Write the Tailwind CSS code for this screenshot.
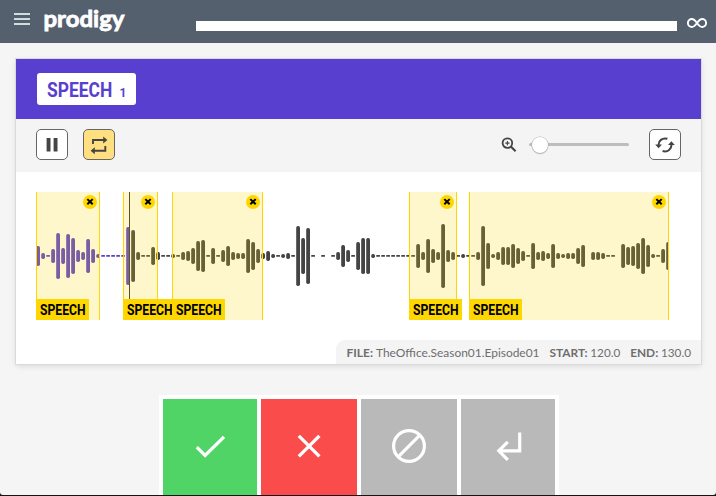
<!DOCTYPE html>
<html lang="en">
<head>
<meta charset="utf-8">
<title>prodigy</title>
<script src="https://cdn.jsdelivr.net/npm/@tailwindcss/browser@4"></script>
</head>
<body class="bg-[#151419] overflow-hidden font-['Lato',sans-serif]">
<div class="flex flex-col h-[495px] w-[716px] overflow-hidden bg-[#f5f5f5] rounded-b-[3px]">
  <header class="h-[43px] shrink-0 bg-[#55606e] flex items-start">
    <svg class="ml-[14px] mt-[13px] w-4 h-3" viewBox="0 0 16 12" fill="#d2dcdf"><path d="M0 0h16v2H0zM0 5h16v2H0zM0 10h16v2H0z"/></svg>
    <svg class="ml-[13px] w-[84px] h-10" viewBox="0 0 84 40"><text x="0.5" y="26.5" font-family="Lato" font-weight="700" font-size="23" fill="#fff" stroke="#fff" stroke-width=".8" textLength="81" lengthAdjust="spacingAndGlyphs">prodigy</text></svg>
    <div class="ml-[69px] mt-[21px] w-[481px] h-[10px] bg-white"></div>
    <svg class="ml-[10px] mt-[18px] w-5 h-[10px]" viewBox="0 0 20 10" fill="none" stroke="#fff" stroke-width="1.9"><path d="M10 5C8.2 2.5 7 1 4.9 1a4 4 0 0 0 0 8C7 9 8.2 7.5 10 5s3-4 5.1-4a4 4 0 0 1 0 8C13 9 11.8 7.5 10 5z"/></svg>
  </header>

  <main class="mt-4 ml-4 w-[685px] h-[305px] shrink-0 bg-white flex flex-col shadow-[0_0_0_1px_#dadada,0_2px_6px_rgba(0,0,0,0.12)]">
    <div class="h-[60px] bg-[#583fcf] flex items-center pl-[21px]">
      <div class="w-[99px] h-8 rounded-[3px] bg-white flex">
        <svg class="w-[78px] h-8" viewBox="0 0 78 32" font-family="Roboto" font-weight="700" fill="#583fcf"><text transform="translate(10 24) scale(.87 1)" font-size="20" textLength="75" lengthAdjust="spacingAndGlyphs">SPEECH</text></svg>
        <svg class="w-[20px] h-8" viewBox="78 0 20 32" font-family="Roboto" font-weight="700" fill="#583fcf"><text x="82.5" y="24" font-size="12">1</text></svg>
      </div>
    </div>
    <div class="h-[53px] bg-[#f4f4f4] flex items-start pt-[10px] pl-5 pr-5">
      <button class="w-8 h-[31px] rounded-[5px] border border-[#666] bg-white flex items-center justify-center">
        <svg class="w-3 h-[14px]" viewBox="0 0 12 14" fill="#444"><path d="M.6 0h3.9v13.5H.6zM7.6 0h3.9v13.5H7.6z"/></svg>
      </button>
      <button class="ml-[15px] w-8 h-[31px] rounded-[5px] border border-[#666] bg-[#ffdf80] flex items-center justify-center">
        <svg class="w-[18px] h-[18px]" viewBox="0 0 18 18"><path d="M3 8V4h11M15.3 10v4.8H4" fill="none" stroke="#444" stroke-width="1.9"/><path d="M13.2 .5l4.2 3.5-4.2 3.5zM4.8 11.3L.6 14.8l4.2 3.5z" fill="#444"/></svg>
      </button>
      <svg class="ml-auto mt-2 w-4 h-4" viewBox="0 0 16 16" fill="none" stroke="#444"><circle cx="6.4" cy="6.1" r="4.8" stroke-width="1.8"/><path d="M9.8 9.5l4.8 4.7" stroke-width="2.1"/><path d="M6.4 4v4.2M4.3 6.1h4.2" stroke-width="1.1"/></svg>
      <div class="relative ml-[12px] mt-[14px] w-[100px] h-[3px] rounded-full bg-[#bdbdbd]">
        <div class="absolute left-[2.5px] -top-[6px] w-4 h-4 rounded-full bg-white shadow-[0_0_0_.6px_#aaa,0_1px_1px_rgba(0,0,0,.25)]"></div>
      </div>
      <button class="ml-5 w-8 h-[31px] rounded-[5px] border border-[#666] bg-white flex items-center justify-center">
        <svg class="w-5 h-4" viewBox="0 0 20 16"><path d="M3.6 8.5C3.1 4 7.3.2 12.4 1.8M16.4 7C16.9 12 12.7 15.6 7.6 14" fill="none" stroke="#444" stroke-width="2"/><path d="M.2 7.6h6.8L3.6 11.2zM13 7.9h6.8L16.4 4.3z" fill="#444"/></svg>
      </button>
    </div>
    <div class="grow flex flex-col pt-5">
      <svg id="wave" class="ml-5 w-[640px] h-[128px]" viewBox="36 0 640 128"></svg>
      <div class="mt-5 self-end w-[365px] h-6 rounded-tl-[9px] bg-[#f4f4f4]">
        <svg class="w-[365px] h-6" viewBox="336 0 365 24" font-family="Lato" font-size="12.2" fill="#6e6e6e">
          <text x="346.5" y="16.8" font-weight="700" textLength="26.5" lengthAdjust="spacingAndGlyphs">FILE:</text>
          <text x="376" y="16.8" textLength="163.5" lengthAdjust="spacingAndGlyphs">TheOffice.Season01.Episode01</text>
          <text x="549.5" y="16.8" font-weight="700" textLength="38" lengthAdjust="spacingAndGlyphs">START:</text>
          <text x="590.3" y="16.8" textLength="30" lengthAdjust="spacingAndGlyphs">120.0</text>
          <text x="630.2" y="16.8" font-weight="700" textLength="28" lengthAdjust="spacingAndGlyphs">END:</text>
          <text x="661" y="16.8" textLength="30" lengthAdjust="spacingAndGlyphs">130.0</text>
        </svg>
      </div>
    </div>
  </main>

  <footer class="mt-[31px] ml-[159px] w-[400px] h-[100px] shrink-0 bg-white p-1 pb-0 flex gap-1">
    <button class="w-[94px] bg-[#50d466] flex"><svg class="w-full h-full" viewBox="0 0 94 96" fill="none" stroke="#fff" stroke-width="3.3"><path d="M33.8 48.2l8.3 8.3L61 37.8"/></svg></button>
    <button class="w-[96px] bg-[#fa4c4a] flex"><svg class="w-full h-full" viewBox="0 0 96 96" fill="none" stroke="#fff" stroke-width="3.3"><path d="M37.8 36.8l20.6 20.6M58.4 36.8L37.8 57.4"/></svg></button>
    <button class="w-[96px] bg-[#b9b9b9] flex"><svg class="w-full h-full" viewBox="0 0 96 96" fill="none" stroke="#fff" stroke-width="3.2"><circle cx="48" cy="47" r="15.4"/><path d="M37.4 57.6l21.2-21.2"/></svg></button>
    <button class="w-[94px] bg-[#b9b9b9] flex"><svg class="w-full h-full" viewBox="0 0 94 96" fill="none" stroke="#fff" stroke-width="3.2"><path d="M58.7 33.5v18.3H38M46.8 42.8L37.8 51.8l9 9"/></svg></button>
  </footer>
</div>
<script>
// Bar heights, one per 5px step; 2 is silence, 0 is a gap.
const bars = [20,6,2,14,46,16,44,36,12,8,34,14,4,2,2,2,2,2,58,52,8,2,2,18,8,2,2,4,2,8,10,16,30,32,2,16,2,12,20,8,6,6,34,28,14,6,10,4,2,4,6,2,60,36,56,2,0,2,0,2,8,22,12,2,28,36,36,4,2,2,2,2,2,2,2,2,24,8,34,14,8,64,12,8,2,4,2,2,8,60,26,4,8,18,18,24,16,10,2,26,8,10,6,24,6,4,6,6,16,22,0,8,8,6,2,2,0,24,18,20,26,36,22,4,2,14,28];
const regions = [[36,100],[123,158],[172,263],[409,457],[469,669]];
let s = '<defs><clipPath id="c"><rect x="36" y="0" width="632" height="128"/></clipPath></defs><g clip-path="url(#c)">';
bars.forEach((h, i) => {
  if (h) s += `<rect x="${36.2 + 5*i}" y="${64 - h/2}" width="3.8" height="${h === 2 ? 1.8 : h}" rx="${h === 2 ? .5 : 1.7}" fill="${i < 19 ? '#583fcf' : '#444'}"/>`;
});
s += '</g><rect x="129" y="0" width="1" height="128" fill="#333"/>';
for (const [a, b] of regions) {
  s += `<rect x="${a}" y="0" width="${b-a}" height="128" fill="#ffd700" fill-opacity=".2"/>
  <rect x="${a}" y="0" width="1" height="128" fill="#ffd700"/><rect x="${b-1}" y="0" width="1" height="128" fill="#ffd700"/>
  <circle cx="${b-10}" cy="10" r="7" fill="#ffd700"/><path d="M${b-12.7} 7.1l5.4 5.2M${b-7.3} 7.1l-5.4 5.2" stroke="#000" stroke-width="2"/>
  <rect x="${a}" y="107" width="53" height="21" fill="#ffd700"/>
  <text x="${a+4}" y="123" font-family="Roboto" font-weight="700" font-size="14.2" textLength="45.5" lengthAdjust="spacingAndGlyphs">SPEECH</text>`;
}
document.getElementById('wave').innerHTML = s;
</script>
</body>
</html>
